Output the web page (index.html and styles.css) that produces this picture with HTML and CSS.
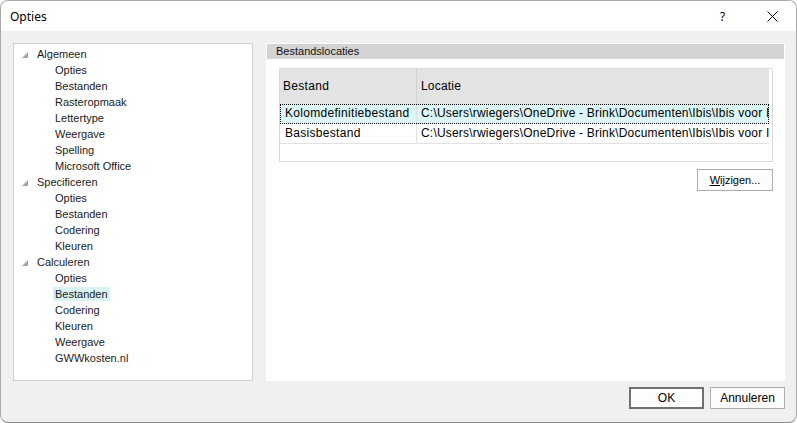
FILE: index.html
```html
<!DOCTYPE html>
<html lang="nl">
<head>
<meta charset="utf-8">
<title>Opties</title>
<link rel="stylesheet" href="styles.css">
</head>
<body>
<div class="window">
  <div class="titlebar">
    <span class="title">Opties</span>
    <span class="help">?</span>
    <span class="close"><svg width="11" height="11" viewBox="0 0 11 11"><path d="M0.5 0.5 L10.5 10.5 M10.5 0.5 L0.5 10.5" stroke="#000" stroke-width="1" fill="none"/></svg></span>
  </div>
  <div class="content">
    <div class="tree">
      <div class="node l1"><svg class="exp" width="6" height="6" viewBox="0 0 6 6"><polygon points="6,0 6,6 0,6" fill="#a6a6a6"/></svg><span>Algemeen</span></div>
      <div class="node l2"><span>Opties</span></div>
      <div class="node l2"><span>Bestanden</span></div>
      <div class="node l2"><span>Rasteropmaak</span></div>
      <div class="node l2"><span>Lettertype</span></div>
      <div class="node l2"><span>Weergave</span></div>
      <div class="node l2"><span>Spelling</span></div>
      <div class="node l2"><span>Microsoft Office</span></div>
      <div class="node l1"><svg class="exp" width="6" height="6" viewBox="0 0 6 6"><polygon points="6,0 6,6 0,6" fill="#a6a6a6"/></svg><span>Specificeren</span></div>
      <div class="node l2"><span>Opties</span></div>
      <div class="node l2"><span>Bestanden</span></div>
      <div class="node l2"><span>Codering</span></div>
      <div class="node l2"><span>Kleuren</span></div>
      <div class="node l1"><svg class="exp" width="6" height="6" viewBox="0 0 6 6"><polygon points="6,0 6,6 0,6" fill="#a6a6a6"/></svg><span>Calculeren</span></div>
      <div class="node l2"><span>Opties</span></div>
      <div class="node l2"><span class="sel">Bestanden</span></div>
      <div class="node l2"><span>Codering</span></div>
      <div class="node l2"><span>Kleuren</span></div>
      <div class="node l2"><span>Weergave</span></div>
      <div class="node l2"><span>GWWkosten.nl</span></div>
    </div>
    <div class="panel">
      <div class="panel-head">Bestandslocaties</div>
      <div class="grid">
        <div class="grid-row head">
          <div class="cell c1">Bestand</div>
          <div class="cell c2">Locatie</div>
        </div>
        <div class="grid-row data selected">
          <div class="cell c1">Kolomdefinitiebestand</div>
          <div class="cell c2">C:\Users\rwiegers\OneDrive - Brink\Documenten\Ibis\Ibis voor Infra\Kolomdefinitie.xml</div>
        </div>
        <div class="grid-row data">
          <div class="cell c1">Basisbestand</div>
          <div class="cell c2">C:\Users\rwiegers\OneDrive - Brink\Documenten\Ibis\Ibis voor Infra\Basis.ibs</div>
        </div>
      </div>
      <div class="actions">
        <button class="btn wijzig"><u>W</u>ijzigen...</button>
      </div>
    </div>
  </div>
  <div class="footer">
    <button class="btn ok">OK</button>
    <button class="btn">Annuleren</button>
  </div>
</div>
</body>
</html>
```
FILE: styles.css
```css
html, body {
  margin: 0;
  padding: 0;
  background: #ffffff;
}
.window {
  width: 797px;
  height: 423px;
  box-sizing: border-box;
  border: 1px solid #a9a9a9;
  border-bottom-color: #8c8c8c;
  border-radius: 8px;
  overflow: hidden;
  background: #f0f0f0;
  display: flex;
  flex-direction: column;
  font-family: "Liberation Sans", Arial, sans-serif;
  color: #000;
}
.titlebar {
  height: 30px;
  background: #ffffff;
  display: flex;
  align-items: center;
  flex-shrink: 0;
}
.title {
  font-family: "Noto Sans", "Open Sans", sans-serif;
  font-size: 12px;
  margin-left: 9px;
  flex: 1;
}
.help {
  font-family: "Noto Sans", sans-serif;
  font-size: 12px;
  width: 12px;
  margin-right: 35px;
}
.close {
  display: flex;
  margin-right: 18px;
}
.content {
  display: flex;
  padding: 12px 11px 0 12px;
  gap: 13px;
  height: 338px;
  flex-shrink: 0;
}
.tree {
  width: 240px;
  flex: 0 0 240px;
  height: 338px;
  box-sizing: border-box;
  border: 1px solid #cfcfcf;
  background: #fff;
  padding-top: 2px;
  font-size: 11px;
}
.node {
  height: 16px;
  display: flex;
  align-items: center;
  color: #1a1a1a;
  white-space: nowrap;
}
.node.l1 {
  padding-left: 8px;
}
.node.l1 .exp {
  margin-right: 7px;
  margin-top: 1px;
}
.node.l1 span {
  padding: 0 2px;
  line-height: 14px;
}
.node.l2 span {
  margin-left: 39px;
  padding: 0 2px;
  line-height: 14px;
}
.node .sel {
  background: #d9f3f3;
}
.panel {
  flex: 1;
  min-width: 0;
  background: #fff;
  padding: 1px;
  display: flex;
  flex-direction: column;
}
.panel-head {
  height: 15px;
  background: #d4d4d4;
  font-size: 11px;
  line-height: 15px;
  padding-left: 9px;
  color: #111;
}
.grid {
  margin: 9px 11px 0 12px;
  height: 94px;
  box-sizing: border-box;
  border: 1px solid #dadada;
  padding-right: 3px;
  font-size: 12px;
  letter-spacing: 0.3px;
}
.grid-row {
  display: flex;
}
.grid-row.head {
  height: 35px;
  background: #e3e3e3;
}
.grid-row.head .cell {
  line-height: 35px;
}
.grid-row.head .c1 {
  border-right: 1px solid #d0d0d0;
  padding-left: 3px;
}
.grid-row.data {
  height: 20px;
  box-sizing: border-box;
  border-bottom: 1px solid #e2e2e2;
}
.grid-row.data .cell {
  line-height: 19px;
}
.grid-row.data .c1 {
  border-right: 1px solid #e2e2e2;
  padding-left: 5px;
}
.grid-row.selected {
  background: #dcf5f5;
  outline: 1px dotted #000;
  outline-offset: -1px;
  border-bottom: none;
}
.cell {
  white-space: nowrap;
  overflow: hidden;
  box-sizing: border-box;
}
.c1 {
  width: 137px;
  flex-shrink: 0;
}
.c2 {
  flex: 1;
  min-width: 0;
  padding-left: 4px;
  letter-spacing: 0.2px;
}
.actions {
  display: flex;
  justify-content: flex-end;
  margin: 7px 11px 0 0;
}
.btn {
  width: 75px;
  height: 22px;
  box-sizing: border-box;
  border: 1px solid #adadad;
  background: #fdfdfd;
  font-family: "Liberation Sans", Arial, sans-serif;
  font-size: 12px;
  color: #000;
  padding: 0;
  margin: 0;
}
.btn.wijzig {
  width: 76px;
  font-size: 11px;
}
.btn.ok {
  border: 2px solid #707070;
}
.footer {
  display: flex;
  justify-content: flex-end;
  gap: 6px;
  padding: 6px 11px 0 0;
}
```
